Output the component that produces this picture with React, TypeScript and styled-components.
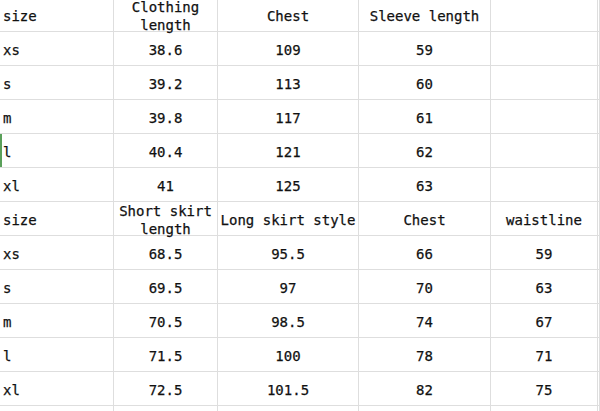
import React from "react";
import styled, { createGlobalStyle } from "styled-components";

const Global = createGlobalStyle`
  html, body { margin: 0; padding: 0; background: #ffffff; overflow: hidden; }
  body { width: 600px; height: 411px; }
`;

const Frame = styled.div`
  width: 600px;
  height: 411px;
  overflow: hidden;
`;

const Sheet = styled.div`
  display: grid;
  grid-template-columns: 114px 104px 141px 132px 107px 1fr;
  grid-auto-rows: 34px;
  width: 600px;
  margin-top: -2px;
  font-family: "DejaVu Sans Mono", "Liberation Mono", monospace;
  font-size: 14px;
  color: #111111;
  background: #ffffff;
`;

const Cell = styled.div<{ $left?: boolean; $mark?: boolean }>`
  box-sizing: border-box;
  border-right: 1px solid #dedede;
  border-bottom: 1px solid #dedede;
  display: flex;
  align-items: center;
  justify-content: ${(p) => (p.$left ? "flex-start" : "center")};
  padding: 3px 0 0 ${(p) => (p.$left ? "3px" : "0")};
  text-align: center;
  line-height: 18px;
  white-space: pre-line;
  overflow: visible;
  -webkit-text-stroke: 0.25px #111111;
  box-shadow: ${(p) => (p.$mark ? "inset 2px 0 0 #5aa05a" : "none")};
`;

const rows: string[][] = [
  ["size", "Clothing\nlength", "Chest", "Sleeve length", ""],
  ["xs", "38.6", "109", "59", ""],
  ["s", "39.2", "113", "60", ""],
  ["m", "39.8", "117", "61", ""],
  ["l", "40.4", "121", "62", ""],
  ["xl", "41", "125", "63", ""],
  ["size", "Short skirt\nlength", "Long skirt style", "Chest", "waistline"],
  ["xs", "68.5", "95.5", "66", "59"],
  ["s", "69.5", "97", "70", "63"],
  ["m", "70.5", "98.5", "74", "67"],
  ["l", "71.5", "100", "78", "71"],
  ["xl", "72.5", "101.5", "82", "75"],
  ["", "", "", "", ""],
];

export default function App() {
  return (
    <>
      <Global />
      <Frame>
        <Sheet>
          {rows.map((r, ri) => (
            <React.Fragment key={ri}>
              {r.map((c, ci) => (
                <Cell key={ci} $left={ci === 0} $mark={ri === 4 && ci === 0}>
                  {c}
                </Cell>
              ))}
              <Cell />
            </React.Fragment>
          ))}
        </Sheet>
      </Frame>
    </>
  );
}
